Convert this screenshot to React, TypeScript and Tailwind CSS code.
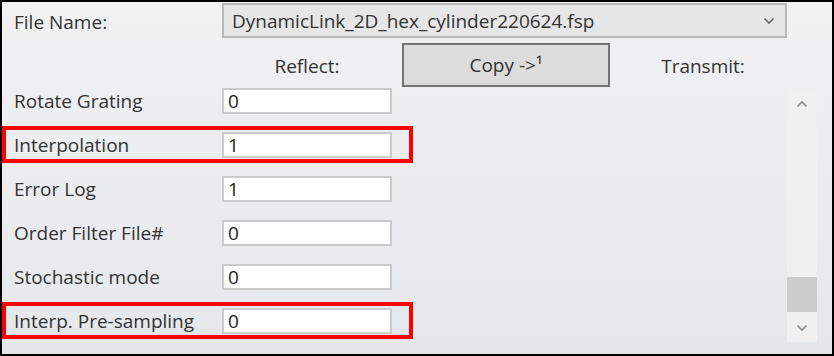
import React from "react";

const font = { fontFamily: '"Open Sans", "Noto Sans", "Liberation Sans", sans-serif' };

function Chevron({ dir, className }: { dir: "up" | "down"; className?: string }) {
  return (
    <svg width="12" height="8" viewBox="0 0 12 8" className={className}>
      <path
        d={dir === "down" ? "M1.5 1.5 L6 6 L10.5 1.5" : "M1.5 6.5 L6 2 L10.5 6.5"}
        fill="none"
        stroke="currentColor"
        strokeWidth="1.6"
      />
    </svg>
  );
}

const rows = [
  { label: "Rotate Grating", value: "0", mark: false },
  { label: "Interpolation", value: "1", mark: true },
  { label: "Error Log", value: "1", mark: false },
  { label: "Order Filter File#", value: "0", mark: false },
  { label: "Stochastic mode", value: "0", mark: false },
  { label: "Interp. Pre-sampling", value: "0", mark: true },
];

export default function App() {
  return (
    <div
      style={font}
      className="w-[834px] h-[356px] border-2 border-black bg-gradient-to-b from-[#f1f1f2] to-[#e5e8eb] flex flex-col overflow-hidden text-[19px] text-[#333]"
    >
      {/* File name row */}
      <div className="flex h-[41px] items-start shrink-0">
        <div className="w-[220px] pl-[12px] h-[40px] flex items-center">File Name:</div>
        <div className="mt-[1px] w-[565px] h-[35px] border-2 border-[#b9b9b9] bg-[#e6e6e6] flex items-center pl-[8px] pr-[10px]">
          <span className="flex-1 pt-[1px]">DynamicLink_2D_hex_cylinder220624.fsp</span>
          <Chevron dir="down" className="text-[#666]" />
        </div>
      </div>

      {/* Reflect / Copy / Transmit */}
      <div className="flex h-[44px] shrink-0 items-center">
        <div className="w-[220px]" />
        <div className="w-[170px] text-center pt-[3px]">Reflect:</div>
        <button className="ml-[10px] w-[208px] h-[44px] border-2 border-[#737373] bg-[#dcdcdc] text-[19px] text-[#333] flex items-center justify-center">
          <span>Copy -&gt;¹</span>
        </button>
        <div className="flex-1 text-center pt-[3px] pr-[36px]">Transmit:</div>
      </div>

      {/* Body */}
      <div className="flex flex-1 min-h-0">
        <div className="w-[785px] flex flex-col pt-[1px]">
          {rows.map((r) => (
            <div key={r.label} className="relative flex h-[44px] shrink-0 items-start">
              <div className="w-[220px] pl-[12px] h-[26px] flex items-center">{r.label}</div>
              <div className="w-[170px] h-[26px] bg-white border-2 border-[#cbcbcb] flex items-center pl-[4px] text-[19px] text-[#222]">
                {r.value}
              </div>
              {r.mark && (
                <div className="absolute left-0 top-[-6px] w-[411px] h-[37px] border-4 border-[#ff0000]" />
              )}
            </div>
          ))}
        </div>
        <div className="mt-[3px] w-[30px] h-[252px] bg-[#f0f0f0] flex flex-col">
          <div className="h-[28px] flex items-center justify-center text-[#8a8a8a]">
            <Chevron dir="up" />
          </div>
          <div className="h-[159px]" />
          <div className="h-[35px] bg-[#cdcdcd]" />
          <div className="h-[1px]" />
          <div className="h-[29px] flex items-center justify-center text-[#8a8a8a]">
            <Chevron dir="down" />
          </div>
        </div>
      </div>
    </div>
  );
}
